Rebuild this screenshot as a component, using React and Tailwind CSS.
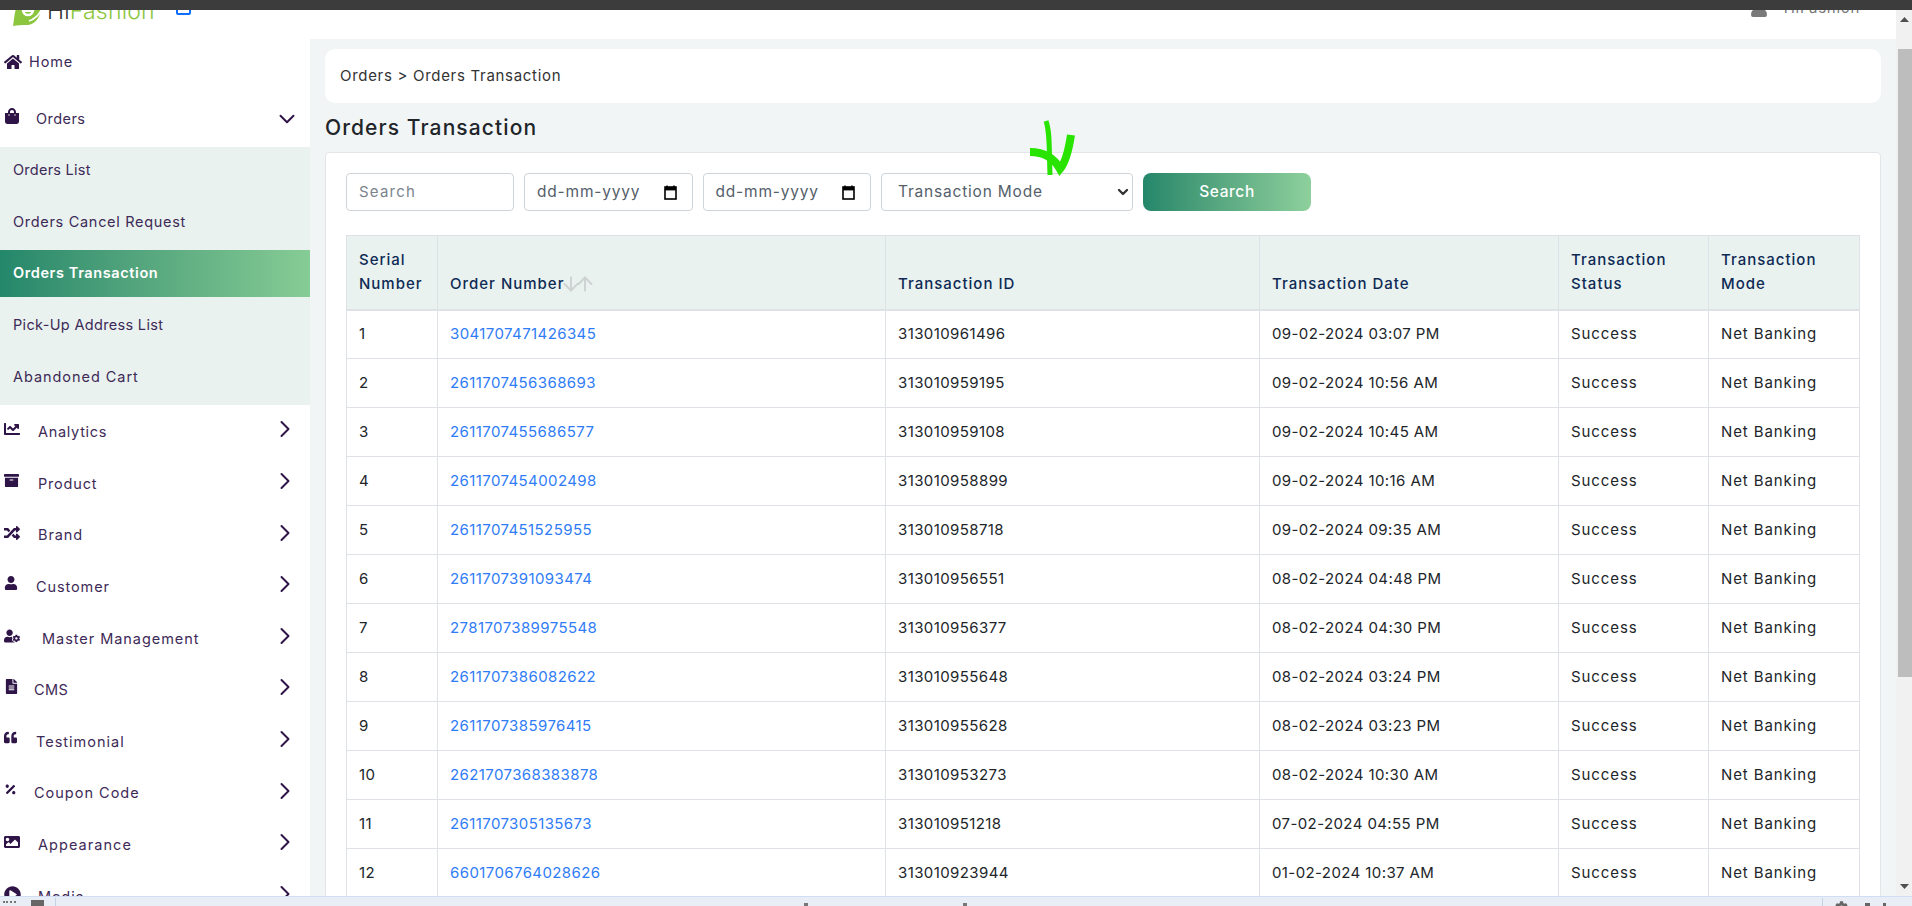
import React from "react";
import { ChevronDown, ChevronRight, ArrowDown, ArrowUp } from "lucide-react";
import { FaHome, FaShoppingBag, FaChartLine, FaArchive, FaRandom, FaUser, FaUserCog, FaFileAlt, FaQuoteLeft, FaPercentage, FaImage, FaPlayCircle, FaCog } from "react-icons/fa";

const rows = [
  ["3041707471426345","313010961496","09-02-2024 03:07 PM"],
  ["2611707456368693","313010959195","09-02-2024 10:56 AM"],
  ["2611707455686577","313010959108","09-02-2024 10:45 AM"],
  ["2611707454002498","313010958899","09-02-2024 10:16 AM"],
  ["2611707451525955","313010958718","09-02-2024 09:35 AM"],
  ["2611707391093474","313010956551","08-02-2024 04:48 PM"],
  ["2781707389975548","313010956377","08-02-2024 04:30 PM"],
  ["2611707386082622","313010955648","08-02-2024 03:24 PM"],
  ["2611707385976415","313010955628","08-02-2024 03:23 PM"],
  ["2621707368383878","313010953273","08-02-2024 10:30 AM"],
  ["2611707305135673","313010951218","07-02-2024 04:55 PM"],
  ["6601706764028626","313010923944","01-02-2024 10:37 AM"],
];
const menu = [
  [FaChartLine,"Analytics","pl-[38px]","text-[16px]","tracking-[0.7px]"],
  [FaArchive,"Product","pl-[38px]","text-[15px]","tracking-[0.8px]"],
  [FaRandom,"Brand","pl-[38px]","text-[16px]","tracking-[0.9px]"],
  [FaUser,"Customer","pl-[36px]","text-[14px]","tracking-[0.9px]"],
  [FaUserCog,"Master Management","pl-[42px]","text-[16px]","tracking-[0.95px]"],
  [FaFileAlt,"CMS","pl-[34px]","text-[15px]","tracking-[0.45px]"],
  [FaQuoteLeft,"Testimonial","pl-[36px]","text-[13px]","tracking-[1px]"],
  [FaPercentage,"Coupon Code","pl-[34px]","text-[13px]","tracking-[1px]"],
  [FaImage,"Appearance","pl-[38px]","text-[16px]","tracking-[1.05px]"],
  [FaPlayCircle,"Media","pl-[38px]","text-[17px]","tracking-[0.9px]"],
];
const sub = "flex h-[47px] items-center pb-[1px] pl-[13px]";
const th = "border border-[#dee2e6] border-b-2 px-3 pb-[13px] align-bottom font-medium leading-[24px]";
const td = "border border-[#dee2e6] px-3";

function Item({ icon: Icon, label, pad, size, track }) {
  return (
    <div className={`relative flex h-[51.6px] items-center text-[14.5px] text-[#3d2a57] ${track}`}>
      <Icon className={`absolute left-1 top-[15px] text-[#2e1447] ${size}`} />
      <span className={pad}>{label}</span>
      <ChevronRight className="absolute left-[271px] top-[9px] text-[#2e1447]" size={28} strokeWidth={1.7} />
    </div>
  );
}

function DateBox() {
  return (
    <div className="flex h-[38px] w-[168.5px] items-center justify-between rounded border border-[#ced4da] bg-white pl-3 pr-[15px] text-[15.5px] tracking-[0.8px] text-[#55606a]">
      <span>dd-mm-yyyy</span>
      <svg width="13" height="15" viewBox="0 0 13 15">
        <path d="M3 0.5V2M10 0.5V2" stroke="#000" strokeWidth="1.5" />
        <rect x="1" y="2" width="11" height="12" fill="none" stroke="#000" strokeWidth="1.6" />
        <rect x="1" y="2" width="11" height="3.4" fill="#000" />
      </svg>
    </div>
  );
}

export default function App() {
  return (
    <div className="flex h-[906px] w-[1912px] flex-col overflow-hidden bg-white" style={{ fontFamily: '"Inter", "Liberation Sans", sans-serif' }}>
      <div className="h-[10px] shrink-0 bg-[#3c3c3c]" />
      <div className="flex min-h-0 flex-1">
        <div className="flex min-w-0 flex-1 flex-col">
          <header className="flex h-[29px] shrink-0 items-start overflow-hidden bg-white">
            <div className="ml-[13px] mt-[-15px] flex items-start">
              <svg width="30" height="31" viewBox="0 0 30 31" className="shrink-0">
                <path d="M0 31 C2 20 1 8 12 4 L29 2 C30 16 25 30 14 30 C8 30 4 30 0 31 Z" fill="#8cc63f" />
                <circle cx="15" cy="15" r="5" fill="none" stroke="#fff" strokeWidth="2.6" />
                <path d="M9 16 L20 16 M29 14 C26 20 22 24 16 26" fill="none" stroke="#fff" strokeWidth="1.8" />
              </svg>
              <span className="ml-[4px] mt-[1px] text-[23px] font-light leading-[30px] tracking-[0.2px] text-[#333]">Hi<span className="text-[#8cc63f]">Fashion</span></span>
              <span className="ml-[21px] mt-[4px] h-[16px] w-[15px] rounded-[2px] border-2 border-[#0d6efd]" />
            </div>
            <div className="ml-auto mr-[36px] mt-[-13px] flex items-center text-[#7a7a7a]">
              <FaUser className="mr-[16px] text-[18px]" />
              <span className="text-[15px] tracking-[0.7px]">HiFashion</span>
            </div>
          </header>

          <div className="flex min-h-0 flex-1">
            <aside className="w-[310px] shrink-0 overflow-hidden bg-white">
              <div className="relative flex h-[46px] items-center text-[14.5px] tracking-[0.9px] text-[#3d2a57]">
                <FaHome className="absolute left-1 top-[14px] text-[18px] text-[#2e1447]" />
                <span className="pl-[29px]">Home</span>
              </div>
              <div className="relative mt-[6px] flex h-[56px] items-center text-[14.5px] tracking-[0.45px] text-[#3d2a57]">
                <FaShoppingBag className="absolute left-1 top-[17px] text-[16px] text-[#2e1447]" />
                <span className="pl-[36px]">Orders</span>
                <ChevronDown className="absolute left-[274px] top-[15px] text-[#2e1447]" size={26} strokeWidth={1.8} />
              </div>
              <div className="flex flex-col gap-[4.6px] bg-[#e9f2ef] pb-[5px] text-[14.5px] text-[#3d2a57]">
                <div className={`${sub} tracking-[0.25px]`}>Orders List</div>
                <div className={`${sub} tracking-[0.7px]`}>Orders Cancel Request</div>
                <div className={`${sub} bg-gradient-to-r from-[#23876a] to-[#86cc95] font-semibold tracking-[0.6px] text-white`}>Orders Transaction</div>
                <div className={`${sub} tracking-[0.33px]`}>Pick-Up Address List</div>
                <div className={`${sub} tracking-[0.95px]`}>Abandoned Cart</div>
              </div>
              <div className="pt-[1px]">
                {menu.map(([I, l, p, s, t]) => <Item key={l} icon={I} label={l} pad={p} size={s} track={t} />)}
              </div>
            </aside>

            <main className="min-w-0 flex-1 overflow-hidden bg-[#f1f5f6] px-[15px] pt-[10px]">
              <div className="flex h-[54px] items-center rounded-[10px] bg-white pl-[15px] text-[15px] tracking-[0.7px] text-[#333]">Orders &gt; Orders Transaction</div>
              <h1 className="mt-[12px] h-[37px] text-[21px] font-medium leading-[26px] tracking-[1.1px] text-[#212529]">Orders Transaction</h1>
              <div className="relative rounded-[4px] border border-[#e2e6e8] bg-white px-[20px] pt-[20px]">
                <div className="flex gap-[10px]">
                  <div className="flex h-[38px] w-[168px] items-center rounded border border-[#ced4da] bg-white pl-3 text-[15px] tracking-[1.2px] text-[#7b848c]">Search</div>
                  <DateBox />
                  <DateBox />
                  <div className="flex h-[38px] w-[252px] items-center justify-between rounded border border-[#ced4da] bg-white pl-4 pr-[1px] text-[15.5px] tracking-[0.8px] text-[#555f6b]">
                    <span>Transaction Mode</span>
                    <ChevronDown size={16} strokeWidth={3.5} className="text-[#333]" />
                  </div>
                  <div className="flex h-[38px] w-[168px] items-center justify-center rounded-lg bg-gradient-to-r from-[#23876a] to-[#8dd09c] text-[15.5px] font-medium tracking-[0.6px] text-white">Search</div>
                </div>
                <svg width="52" height="60" viewBox="0 0 52 60" className="absolute left-[699px] top-[-35px] z-10">
                  <path d="M21 3 C25 14 24 30 25 57" fill="none" stroke="#28e400" strokeWidth="5" />
                  <path d="M5 34 C16 34 28 38 35 51 C41 44 44 30 46 17" fill="none" stroke="#28e400" strokeWidth="8" />
                </svg>

                <table className="mt-[24px] w-full table-fixed border-collapse text-[15px] tracking-[0.4px]">
                  <colgroup>
                    <col className="w-[91px]" />
                    <col className="w-[448px]" />
                    <col className="w-[374px]" />
                    <col className="w-[299px]" />
                    <col className="w-[150px]" />
                    <col className="w-[151px]" />
                  </colgroup>
                  <thead>
                    <tr className="h-[74px] bg-[#e9f2ef] text-left tracking-[1px] text-[#0e2a55]">
                      <th className={th}>Serial Number</th>
                      <th className={th}>
                        <span className="inline-flex h-[24px] items-center">Order Number<ArrowDown size={22} strokeWidth={2.2} className="-ml-1 text-[#cfd2d2]" /><ArrowUp size={22} strokeWidth={2.2} className="-ml-[8px] text-[#cfd2d2]" /></span>
                      </th>
                      <th className={th}>Transaction ID</th>
                      <th className={th}>Transaction Date</th>
                      <th className={th}>Transaction Status</th>
                      <th className={th}>Transaction Mode</th>
                    </tr>
                  </thead>
                  <tbody className="text-[#212529]">
                    {rows.map((r, i) => (
                      <tr key={r[0]} className="h-[49px]">
                        <td className={td}>{i + 1}</td>
                        <td className={`${td} text-[#2f7cf6]`}>{r[0]}</td>
                        <td className={td}>{r[1]}</td>
                        <td className={td}>{r[2]}</td>
                        <td className={`${td} tracking-[0.9px]`}>Success</td>
                        <td className={`${td} tracking-[0.9px]`}>Net Banking</td>
                      </tr>
                    ))}
                  </tbody>
                </table>
              </div>
            </main>
          </div>
        </div>
        <div className="flex w-[16px] shrink-0 flex-col items-center bg-[#f1f1f1]">
          <svg width="9" height="5" viewBox="0 0 9 5" className="mt-[7px] shrink-0"><path d="M4.5 0L9 5H0Z" fill="#505050" /></svg>
          <div className="ml-[1px] mt-[27px] h-[628px] w-[14px] shrink-0 bg-[#bdbdbd]" />
          <svg width="9" height="5" viewBox="0 0 9 5" className="mt-[207px] shrink-0"><path d="M0 0H9L4.5 5Z" fill="#505050" /></svg>
        </div>
      </div>
      <div className="flex h-[10px] shrink-0 items-end overflow-hidden border-t border-[#cfdef5] bg-[#e9edf5]">
        <span className="mb-[3px] ml-[3px] h-[2px] w-[13px] border-t-2 border-dotted border-[#777]" />
        <span className="ml-[15px] h-[6px] w-[13px] bg-[#666]" />
        <span className="ml-[11px] h-[8px] w-px bg-[#c5d2e6]" />
        <span className="ml-[748px] h-[3px] w-[4px] bg-[#777]" />
        <span className="ml-[155px] h-[3px] w-[4px] bg-[#777]" />
        <span className="ml-[855px] h-[8px] w-px bg-[#c5d2e6]" />
        <FaCog className="mb-[-8px] ml-[12px] text-[13px] text-[#666]" />
        <span className="ml-[17px] h-[3px] w-[5px] bg-[#666]" />
        <span className="ml-[13px] h-[3px] w-[3px] bg-[#666]" />
      </div>
    </div>
  );
}
